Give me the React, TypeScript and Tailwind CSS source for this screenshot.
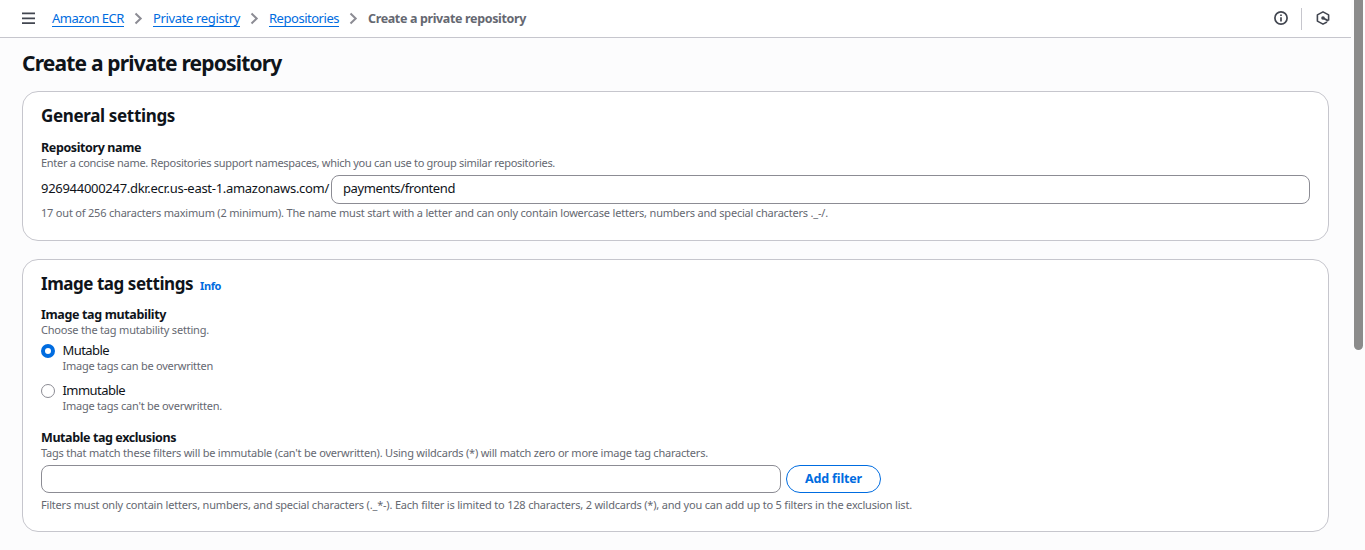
import type { ReactNode } from "react";

function Chevron() {
  return (
    <svg className="mx-[9px] h-4 w-[11px] shrink-0" viewBox="0 0 11 16" fill="none" stroke="#8c8c94" strokeWidth="2">
      <path d="M2.5 2.5 L7.7 7.5 L2.5 12.5" />
    </svg>
  );
}

function Crumb({ children, className }: { children: ReactNode; className: string }) {
  return (
    <a href="#" className={`mb-px h-[17px] border-b border-[#006ce0] leading-[17px] text-[#006ce0] ${className}`}>
      {children}
    </a>
  );
}

function Label({ children, className }: { children: ReactNode; className: string }) {
  return <div className={`h-4 text-[12.5px] leading-[18px] font-bold ${className}`}>{children}</div>;
}

function Hint({ children, className }: { children: ReactNode; className: string }) {
  return <div className={`h-4 text-[11px] leading-4 text-[#656871] ${className}`}>{children}</div>;
}

function Radio({ checked }: { checked?: boolean }) {
  return checked ? (
    <span className="mt-[2px] size-[14px] shrink-0 rounded-full border-[4px] border-[#006ce0] bg-white" />
  ) : (
    <span className="mt-[2px] size-[14px] shrink-0 rounded-full border border-[#8c8c94] bg-white" />
  );
}

function TopBar() {
  return (
    <header className="flex h-[38px] items-center border-b border-[#c6c6cd] bg-white pr-[21px] pl-[22px]">
      <svg className="mr-[17px] mb-[2px] h-[14px] w-[13px] shrink-0" viewBox="0 0 13 14" stroke="#424650" strokeWidth="1.7">
        <path d="M0 2.4H13M0 7.3H13M0 12.2H13" />
      </svg>
      <nav className="flex items-center text-[13px]">
        <Crumb className="w-[72px] tracking-[-0.469px]">Amazon ECR</Crumb>
        <Chevron />
        <Crumb className="w-[87px] tracking-[-0.351px]">Private registry</Crumb>
        <Chevron />
        <Crumb className="w-[70px] tracking-[-0.475px]">Repositories</Crumb>
        <Chevron />
        <span className="text-[12.5px] leading-[18px] font-bold tracking-[-0.36px] text-[#656871]">
          Create a private repository
        </span>
      </nav>
      <div className="ml-auto flex items-center">
        <svg className="mb-px size-[14px]" viewBox="0 0 14 14" fill="none" stroke="#424650" strokeWidth="1.7">
          <circle cx="7" cy="7" r="6.1" />
          <path d="M7 6.2V10.4M7 3.4V5.1" />
        </svg>
        <span className="mr-[14px] ml-[13px] h-[22px] w-px bg-[#c6c6cd]" />
        <svg className="mb-px size-[14px]" viewBox="0 0 14 14" fill="none" stroke="#424650" strokeWidth="1.6">
          <path d="M11 11 L7 13.1 L1.4 10.1 V3.9 L7 0.9 L12.6 3.9 V9.6" strokeLinejoin="round" />
          <path d="M7 7 L12.4 9.8" strokeWidth="1.9" />
          <circle cx="7" cy="7" r="1.8" fill="#424650" stroke="none" />
        </svg>
      </div>
    </header>
  );
}

function GeneralSettings() {
  return (
    <section className="h-[150px] rounded-[16px] border border-[#c6c6cd] bg-white px-[18px] pt-[12px]">
      <h2 className="h-6 text-[17px] leading-6 font-bold tracking-[-0.34px]">General settings</h2>
      <Label className="mt-[11px] tracking-[-0.39px]">Repository name</Label>
      <Hint className="tracking-[-0.29px]">
        Enter a concise name. Repositories support namespaces, which you can use to group similar repositories.
      </Hint>
      <div className="mt-1 flex h-[29px] items-center">
        <span className="w-[290px] shrink-0 pb-[3px] text-[13px] leading-[18px] tracking-[-0.287px]">
          926944000247.dkr.ecr.us-east-1.amazonaws.com/
        </span>
        <input
          className="h-[29px] min-w-0 flex-1 rounded-lg border border-[#8c8c94] bg-white px-[11px] pb-[3px] text-[13px] tracking-[-0.396px] outline-none"
          defaultValue="payments/frontend"
        />
      </div>
      <Hint className="mt-px tracking-[-0.2px]">
        17 out of 256 characters maximum (2 minimum). The name must start with a letter and can only contain lowercase
        letters, numbers and special characters ._-/.
      </Hint>
    </section>
  );
}

function ImageTagSettings() {
  return (
    <section className="mt-[18px] h-[273px] rounded-[16px] border border-[#c6c6cd] bg-white px-[18px] pt-[12px]">
      <div className="flex h-6 items-baseline">
        <h2 className="w-[159px] text-[17px] leading-6 font-bold tracking-[-0.459px]">Image tag settings</h2>
        <a href="#" className="text-[11px] leading-4 font-bold tracking-[-0.39px] text-[#006ce0]">
          Info
        </a>
      </div>
      <Label className="mt-[10px] tracking-[-0.355px]">Image tag mutability</Label>
      <Hint className="tracking-[-0.197px]">Choose the tag mutability setting.</Hint>
      <div className="mt-1 flex flex-col gap-2">
        <div className="flex gap-[7.5px]">
          <Radio checked />
          <div>
            <div className="h-4 text-[13px] leading-4 tracking-[-0.55px]">Mutable</div>
            <Hint className="tracking-[-0.25px]">Image tags can be overwritten</Hint>
          </div>
        </div>
        <div className="flex gap-[7.5px]">
          <Radio />
          <div>
            <div className="h-4 text-[13px] leading-4 tracking-[-0.55px]">Immutable</div>
            <Hint className="tracking-[-0.235px]">Image tags can't be overwritten.</Hint>
          </div>
        </div>
      </div>
      <Label className="mt-[15px] tracking-[-0.406px]">Mutable tag exclusions</Label>
      <Hint className="tracking-[-0.212px]">
        Tags that match these filters will be immutable (can't be overwritten). Using wildcards (*) will match zero or
        more image tag characters.
      </Hint>
      <div className="mt-1 flex h-7 gap-[5px]">
        <input className="h-7 w-[740px] rounded-lg border border-[#8c8c94] bg-white px-3 text-[13px] outline-none" />
        <button className="h-7 w-[95px] rounded-full border-[1.5px] border-[#006ce0] bg-white pt-px text-[12.5px] leading-none font-bold tracking-[-0.15px] text-[#006ce0]">
          Add filter
        </button>
      </div>
      <Hint className="mt-1 tracking-[-0.193px]">
        Filters must only contain letters, numbers, and special characters (._*-). Each filter is limited to 128
        characters, 2 wildcards (*), and you can add up to 5 filters in the exclusion list.
      </Hint>
    </section>
  );
}

export default function App() {
  return (
    <div className="flex h-[550px] overflow-hidden bg-[#fcfcfd] font-['Noto_Sans',sans-serif] whitespace-nowrap text-[#0f141a]">
      <div className="w-[1351px] shrink-0">
        <TopBar />
        <main className="pr-[22px] pl-[22px]">
          <h1 className="mt-[11px] mb-[14px] h-7 text-[21px] leading-7 font-bold tracking-[-0.82px]">
            Create a private repository
          </h1>
          <GeneralSettings />
          <ImageTagSettings />
        </main>
      </div>
      <div className="ml-[3px] h-[350px] w-[9px] rounded-b-full bg-[#8b8b8b]" />
    </div>
  );
}
